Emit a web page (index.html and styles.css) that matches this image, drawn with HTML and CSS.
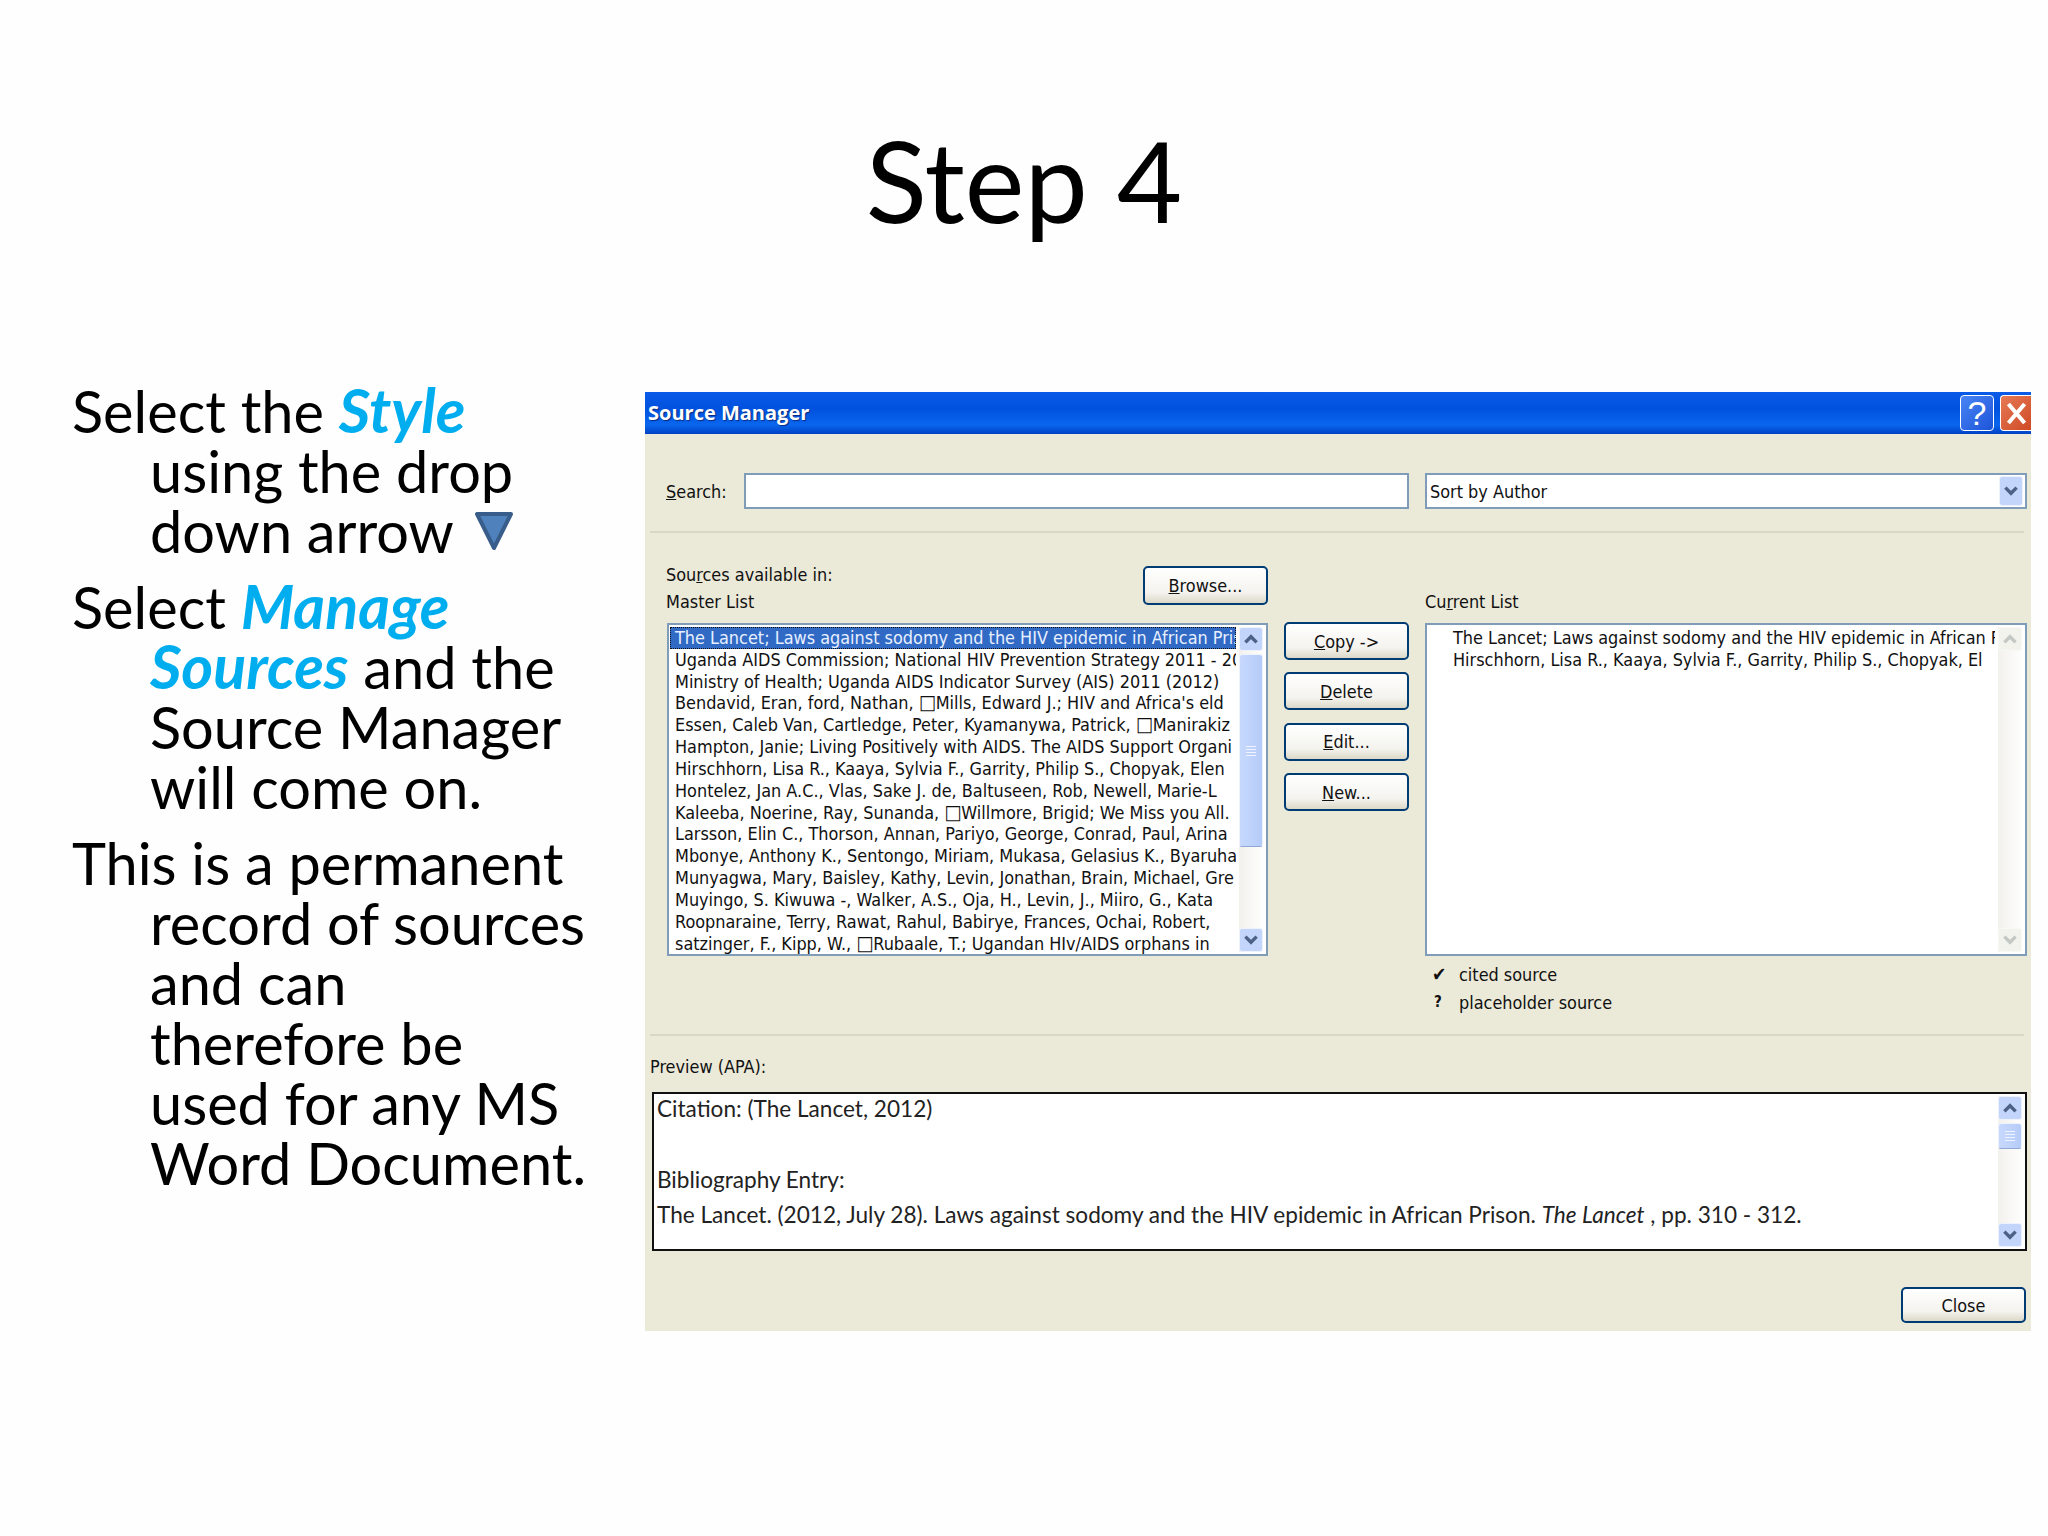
FILE: index.html
```html
<!DOCTYPE html>
<html lang="en">
<head>
    <meta charset="UTF-8">
    <title>Step 4</title>
    <link rel="stylesheet" href="styles.css">
</head>
<body>
    <h1 class="title">Step 4</h1>

    <div class="content">
        <div class="notes">
            <p>Select the <em>Style</em><br>using the drop<br>down arrow <svg class="arrow" viewBox="0 0 40 40"><path d="M3 3H37L20 37Z" fill="#4f81bd" stroke="#385d8a" stroke-width="4" stroke-linejoin="round"/></svg></p>
            <p>Select <em>Manage</em><br><em>Sources</em> and the<br>Source Manager<br>will come on.</p>
            <p>This is a permanent<br>record of sources<br>and can<br>therefore be<br>used for any MS<br>Word Document.</p>
        </div>

        <div class="dialog">
            <div class="titlebar">
                <span class="titlebar-text">Source Manager</span>
                <span class="win-btn help">?</span>
                <span class="win-btn close">
                    <svg viewBox="0 0 20 20" width="27" height="27"><path d="M4 3L16 17M16 3L4 17" stroke="#fff" stroke-width="3" fill="none"/></svg>
                </span>
            </div>

            <div class="search-row">
                <label class="search-label"><u>S</u>earch:</label>
                <div class="field"></div>
                <div class="field select">
                    <span>Sort by Author</span>
                    <span class="sb-btn drop"><svg viewBox="0 0 16 16"><path d="M3 5L8 10L13 5" stroke="#4d6185" stroke-width="3" fill="none"/></svg></span>
                </div>
            </div>

            <div class="sep"></div>

            <div class="lists">
                <div class="list-head">
                    <div>
                        <div class="line">Sou<u>r</u>ces available in:</div>
                        <div class="line">Master List</div>
                    </div>
                    <button class="btn browse"><u>B</u>rowse...</button>
                </div>
                <div></div>
                <div class="current-head line">Cu<u>r</u>rent List</div>

                <div class="listbox">
                    <div class="rows">
                        <div class="row selected">The Lancet; Laws against sodomy and the HIV epidemic in African Pris</div>
                        <div class="row">Uganda AIDS Commission; National HIV Prevention Strategy 2011 - 20</div>
                        <div class="row">Ministry of Health; Uganda AIDS Indicator Survey (AIS) 2011 (2012)</div>
                        <div class="row">Bendavid, Eran, ford, Nathan, <span class="tofu">□</span>Mills, Edward J.; HIV and Africa's eld</div>
                        <div class="row">Essen, Caleb Van, Cartledge, Peter, Kyamanywa, Patrick, <span class="tofu">□</span>Manirakiz</div>
                        <div class="row">Hampton, Janie; Living Positively with AIDS. The AIDS Support Organi</div>
                        <div class="row">Hirschhorn, Lisa R., Kaaya, Sylvia F., Garrity, Philip S., Chopyak, Elen</div>
                        <div class="row">Hontelez, Jan A.C., Vlas, Sake J. de, Baltuseen, Rob, Newell, Marie-L</div>
                        <div class="row">Kaleeba, Noerine, Ray, Sunanda, <span class="tofu">□</span>Willmore, Brigid; We Miss you All.</div>
                        <div class="row">Larsson, Elin C., Thorson, Annan, Pariyo, George, Conrad, Paul, Arina</div>
                        <div class="row">Mbonye, Anthony K., Sentongo, Miriam, Mukasa, Gelasius K., Byaruha</div>
                        <div class="row">Munyagwa, Mary, Baisley, Kathy, Levin, Jonathan, Brain, Michael, Gre</div>
                        <div class="row">Muyingo, S. Kiwuwa -, Walker, A.S., Oja, H., Levin, J., Miiro, G., Kata</div>
                        <div class="row">Roopnaraine, Terry, Rawat, Rahul, Babirye, Frances, Ochai, Robert,</div>
                        <div class="row">satzinger, F., Kipp, W., <span class="tofu">□</span>Rubaale, T.; Ugandan HIv/AIDS orphans in</div>
                    </div>
                    <div class="scrollbar">
                        <span class="sb-btn"><svg viewBox="0 0 16 16"><path d="M3 11L8 6L13 11" stroke="#4d6185" stroke-width="3" fill="none"/></svg></span>
                        <span class="sb-thumb tall"><i></i><i></i><i></i><i></i></span>
                        <span class="sb-fill"></span>
                        <span class="sb-btn"><svg viewBox="0 0 16 16"><path d="M3 5L8 10L13 5" stroke="#4d6185" stroke-width="3" fill="none"/></svg></span>
                    </div>
                </div>

                <div class="actions">
                    <button class="btn"><u>C</u>opy -&gt;</button>
                    <button class="btn"><u>D</u>elete</button>
                    <button class="btn"><u>E</u>dit...</button>
                    <button class="btn"><u>N</u>ew...</button>
                </div>

                <div class="listbox">
                    <div class="rows current">
                        <div class="row">The Lancet; Laws against sodomy and the HIV epidemic in African P</div>
                        <div class="row">Hirschhorn, Lisa R., Kaaya, Sylvia F., Garrity, Philip S., Chopyak, El</div>
                    </div>
                    <div class="scrollbar disabled">
                        <span class="sb-btn"><svg viewBox="0 0 16 16"><path d="M3 11L8 6L13 11" stroke="#c4c8c4" stroke-width="3" fill="none"/></svg></span>
                        <span class="sb-fill"></span>
                        <span class="sb-btn"><svg viewBox="0 0 16 16"><path d="M3 5L8 10L13 5" stroke="#c4c8c4" stroke-width="3" fill="none"/></svg></span>
                    </div>
                </div>
            </div>

            <div class="legend">
                <div class="legend-row"><span class="mark tick">✔</span>cited source</div>
                <div class="legend-row"><span class="mark">?</span>placeholder source</div>
            </div>

            <div class="sep lower"></div>

            <div class="line preview-label">Preview (APA):</div>
            <div class="preview">
                <div class="preview-text">
                    <p>Citation: (The Lancet, 2012)</p>
                    <p class="entry">Bibliography Entry:</p>
                    <p class="ref">The Lancet. (2012, July 28). Laws against sodomy and the HIV epidemic in African Prison. <i>The Lancet</i> , pp. 310 - 312.</p>
                </div>
                <div class="scrollbar">
                    <span class="sb-btn"><svg viewBox="0 0 16 16"><path d="M3 11L8 6L13 11" stroke="#4d6185" stroke-width="3" fill="none"/></svg></span>
                    <span class="sb-thumb"><i></i><i></i><i></i><i></i></span>
                    <span class="sb-fill"></span>
                    <span class="sb-btn"><svg viewBox="0 0 16 16"><path d="M3 5L8 10L13 5" stroke="#4d6185" stroke-width="3" fill="none"/></svg></span>
                </div>
            </div>

            <div class="footer">
                <button class="btn close-btn">Close</button>
            </div>
        </div>
    </div>
</body>
</html>
```

FILE: styles.css
```css
* {
    margin: 0;
    padding: 0;
    box-sizing: border-box;
}
body {
    width: 2048px;
    height: 1536px;
    background: #fefefe;
    overflow: hidden;
    font-family: Lato, sans-serif;
    color: #000;
}
.title {
    height: 392px;
    padding-top: 114px;
    text-align: center;
    font-size: 113px;
    font-weight: 400;
    line-height: 130px;
}
.content {
    display: flex;
}
.notes {
    width: 645px;
    margin-top: -11px;
    padding-left: 72px;
    font-size: 57.7px;
    line-height: 60px;
}
.notes p {
    padding-left: 78px;
    text-indent: -78px;
    margin-bottom: 16px;
}
.notes em {
    color: #00aeef;
    font-size: 61px;
    font-weight: 700;
    font-style: italic;
    line-height: 0;
}
.arrow {
    width: 40px;
    height: 40px;
    margin-left: 6px;
    vertical-align: 2px;
}

/* dialog */
.dialog {
    width: 1386px;
    height: 939px;
    display: flex;
    flex-direction: column;
    background: #ebe9d8;
    font-family: "DejaVu Sans", sans-serif;
    font-stretch: condensed;
    font-size: 17.9px;
    color: #111;
}
.titlebar {
    height: 42px;
    display: flex;
    align-items: center;
    padding-left: 3px;
    background: linear-gradient(#0a5ce8 0%, #0052de 40%, #0a66ee 78%, #0042c4 100%);
}
.titlebar-text {
    flex: 1;
    margin-top: -2px;
    color: #fff;
    font-family: "Open Sans", sans-serif;
    font-stretch: normal;
    font-weight: 700;
    font-size: 20px;
    text-shadow: 1px 1px 1px #0a2a80;
}
.win-btn {
    height: 36px;
    display: flex;
    align-items: center;
    justify-content: center;
    color: #fff;
    font-size: 34px;
    border: 1px solid #fff;
    border-radius: 4px;
}
.help {
    width: 34px;
    margin-right: 6px;
    background: linear-gradient(135deg, #4a85f5, #1c54d8);
    font-family: "Liberation Sans", sans-serif;
}
.close {
    width: 31px;
    background: linear-gradient(135deg, #e67a55, #cf4a26);
    border-right: 0;
    border-radius: 4px 0 0 4px;
}
.search-row {
    display: flex;
    align-items: center;
    margin-top: 39px;
    padding: 0 4px 0 21px;
}
.search-label {
    width: 78px;
}
.field {
    width: 665px;
    height: 36px;
    background: #fff;
    border: 2px solid #7f9db9;
}
.select {
    width: 602px;
    margin-left: 16px;
    display: flex;
    align-items: center;
    justify-content: space-between;
    padding: 0 2px 0 3px;
}
.sep {
    height: 2px;
    margin: 22px 7px 0 5px;
    background: #d8d6c6;
}
.sep.lower {
    margin-top: 18px;
}
.lists {
    display: grid;
    grid-template-columns: 601px 125px 602px;
    column-gap: 16px;
    margin: 28px 0 0 22px;
}
.line {
    line-height: 27px;
}
.list-head {
    display: flex;
    justify-content: space-between;
    height: 62px;
    margin-left: -1px;
}
.current-head {
    margin-top: 27px;
}
.btn {
    height: 38px;
    border: 2px solid #003c74;
    border-radius: 5px;
    background: linear-gradient(#fff, #f4f3ee 70%, #dcd8c8);
    font-family: "DejaVu Sans", sans-serif;
    font-stretch: condensed;
    font-size: 17.9px;
    color: #111;
}
.browse {
    width: 125px;
    height: 39px;
    margin-top: 5px;
}
.actions {
    display: flex;
    flex-direction: column;
    gap: 12.4px;
    margin-top: -1px;
}
.listbox {
    height: 333px;
    display: flex;
    background: #fff;
    border: 2px solid #7f9db9;
}
.rows {
    flex: 1;
    min-width: 0;
    padding: 2px 0 0 1px;
}
.rows.current {
    padding-left: 21px;
}
.row {
    height: 21.83px;
    line-height: 21.83px;
    padding-left: 5px;
    white-space: nowrap;
    overflow: hidden;
}
.row.selected {
    background: #316ac5;
    color: #e8f0ff;
    outline: 1px dotted #111;
    outline-offset: -1px;
}
.tofu {
    font-size: 20px;
    line-height: 1;
}

/* scrollbars */
.scrollbar {
    width: 24px;
    margin: 2px 3px;
    display: flex;
    flex-direction: column;
    background: linear-gradient(90deg, #f3f1ec, #fefefe);
}
.sb-btn {
    width: 24px;
    height: 24px;
    flex: none;
    display: flex;
    align-items: center;
    justify-content: center;
    background: #c4d5fb;
    border: 1px solid #eef2fc;
    border-radius: 3px;
}
.sb-btn svg {
    width: 18px;
    height: 18px;
}
.sb-btn.drop {
    height: 30px;
}
.sb-thumb {
    height: 26px;
    margin-top: 3px;
    flex: none;
    display: flex;
    flex-direction: column;
    align-items: center;
    justify-content: center;
    gap: 2px;
    background: linear-gradient(90deg, #c7d8fd, #b5ccf8);
    border: 1px solid #eef2fc;
    border-bottom-color: #8fa8d8;
    border-radius: 3px;
}
.sb-thumb.tall {
    height: 193px;
}
.sb-thumb i {
    width: 10px;
    height: 1px;
    background: #eef3ff;
}
.sb-fill {
    flex: 1;
}
.scrollbar.disabled .sb-btn {
    background: #f3f3ee;
    border-color: #f8f8f4;
}

.legend {
    margin: 4px 0 0 787px;
}
.legend-row {
    display: flex;
    align-items: center;
    height: 28px;
}
.mark {
    width: 27px;
    padding-left: 2px;
    font-weight: 700;
    font-size: 15px;
}
.mark.tick {
    padding-left: 0;
    font-size: 19px;
}
.preview-label {
    margin: 17px 0 0 5px;
}
.preview {
    height: 159px;
    margin: 12px 4px 0 7px;
    display: flex;
    background: #fff;
    border: 2px solid #111;
}
.preview-text {
    flex: 1;
    padding: 2px 0 0 3px;
    font-family: Lato, sans-serif;
    font-stretch: normal;
    font-size: 22.6px;
    line-height: 26px;
    color: #222;
}
.entry {
    margin-top: 45px;
}
.ref {
    margin-top: 9px;
}
.footer {
    display: flex;
    justify-content: flex-end;
    margin-top: 36px;
    padding-right: 5px;
}
.close-btn {
    width: 125px;
    height: 36px;
}
```
